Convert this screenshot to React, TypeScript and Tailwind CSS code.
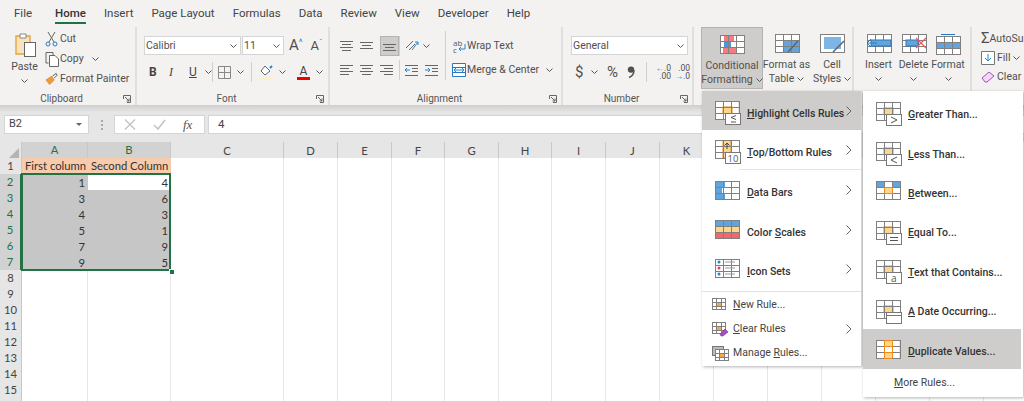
import type { ReactNode } from "react";

const tabs = ["File", "Home", "Insert", "Page Layout", "Formulas", "Data", "Review", "View", "Developer", "Help"];

const Chevron = ({ className = "" }: { className?: string }) => (
  <svg width="7" height="4" viewBox="0 0 7 4" className={`shrink-0 ${className}`}>
    <path d="M.5.5 3.5 3.5 6.5.5" fill="none" stroke="#555" strokeWidth="1" />
  </svg>
);

const Launcher = () => (
  <svg width="8" height="8" viewBox="0 0 8 8" className="shrink-0">
    <path d="M.5 4V.5H7.5V7.5H4M2 2 6 6M6 3.5V6H3.5" fill="none" stroke="#666" />
  </svg>
);

const Sep = ({ h = "h-[20px]" }: { h?: string }) => <div className={`w-px ${h} bg-[#d2d0ce] shrink-0`} />;

const Group = ({ width, label, children }: { width: string; label: string; children: ReactNode }) => (
  <div className={`${width} shrink-0 flex flex-col border-r-2 border-[#e1dfdd]`}>
    <div className="h-[64px]">{children}</div>
    <div className="h-[14px] flex items-center pr-[4px] pt-[1px] text-[10px] leading-none text-[#555]">
      <span className="flex-1 text-center">{label}</span>
      <Launcher />
    </div>
  </div>
);

const Lines = ({ kind, dy = 0 }: { kind: "l" | "c" | "r"; dy?: number }) => {
  const long = 13;
  const short = 9;
  const x = kind === "l" ? 0 : kind === "c" ? 2 : 4;
  return (
    <svg width="13" height="13" viewBox="0 0 13 13">
      <g stroke="#666" strokeWidth="1">
        <path d={`M0 ${1.5 + dy}H${long}`} />
        <path d={`M${x} ${4.5 + dy}H${x + short}`} />
        <path d={`M0 ${7.5 + dy}H${long}`} />
        {dy === 0 && <path d={`M${x} 10.5H${x + short}`} />}
      </g>
    </svg>
  );
};

const Indent = ({ flip = false }: { flip?: boolean }) => (
  <svg width="13" height="13" viewBox="0 0 13 13">
    <path d="M0 1.5H13M7 4.5H13M7 7.5H13M0 11.5H13" stroke="#666" />
    <path d={flip ? "M0 6H5M3 4 5 6 3 8" : "M5 6H0M2 4 0 6 2 8"} stroke="#1e88d2" fill="none" />
  </svg>
);

const Sheet = ({ x = 0, y = 0, w = 24, h = 18, cols = [8, 16], rows = [6, 12] }: { x?: number; y?: number; w?: number; h?: number; cols?: number[]; rows?: number[] }) => (
  <g stroke="#808080" strokeWidth="1" fill="none">
    {cols.map((c) => <path key={c} d={`M${x + c + 0.5} ${y}V${y + h}`} />)}
    {rows.map((r) => <path key={r} d={`M${x} ${y + r + 0.5}H${x + w}`} />)}
    <rect x={x + 0.5} y={y + 0.5} width={w} height={h} />
  </g>
);

const Overlay = ({ mark }: { mark: string }) => (
  <g>
    <rect x="10.5" y="12.5" width="15" height="11" fill="#fff" stroke="#777" />
    {mark === ">" && <path d="M15 15 21 18 15 21" fill="none" stroke="#555" />}
    {mark === "<" && <path d="M21 15 15 18 21 21" fill="none" stroke="#555" />}
    {mark === "<=" && <path d="M21 14.5 16 16.5 21 18.5M16 21H21" fill="none" stroke="#555" />}
    {mark === "=" && <path d="M14 16.5H22M14 19.5H22" fill="none" stroke="#555" />}
    {mark === "a" && <text x="15" y="21.5" fontSize="10" fill="#555" fontFamily="Open Sans">a</text>}
    {mark === "10" && <text x="12.5" y="22" fontSize="9.5" fill="#555" fontFamily="Open Sans">10</text>}
    {mark === "date" && <path d="M10.5 15.5H25.5" stroke="#777" />}
  </g>
);

const MenuIcon = ({ kind }: { kind: string }) => (
  <svg width="27" height="25" viewBox="0 0 27 25" className="shrink-0">
    <rect x="0.5" y="0.5" width="23" height="18" fill="#fff" />
    {["<=", ">", "<", "=", "a", "date"].includes(kind) && <rect x="8" y="6" width="9" height="6.5" fill="#fbd68b" stroke="#ed8a19" />}
    {kind === "top" && <rect x="8" y="0" width="8" height="18" fill="#fbd68b" stroke="#ed8a19" />}
    {kind === "between" && (
      <>
        <rect x="0.5" y="0.5" width="8" height="6" fill="#62a5dc" />
        <rect x="16" y="0.5" width="8" height="6" fill="#62a5dc" />
      </>
    )}
    {kind === "bars" && <path d="M1 1H10V6H7V12H10V18H1Z" fill="#62a5dc" />}
    {kind === "scales" && (
      <>
        <rect x="1" y="1" width="23" height="5" fill="#62a5dc" />
        <rect x="1" y="7" width="23" height="5" fill="#fbd68b" />
        <rect x="1" y="13" width="23" height="5" fill="#f0696e" />
      </>
    )}
    {kind === "dup" && (
      <>
        <rect x="8" y="0.5" width="8" height="6" fill="#fbd68b" />
        <rect x="8" y="12" width="8" height="6" fill="#fbd68b" />
      </>
    )}
    <Sheet />
    {kind === "between" && <rect x="8.5" y="6.5" width="8" height="6" fill="#fbd68b" stroke="#ed8a19" />}
    {kind === "dup" && <path d="M8.5 0V18M16.5 0V18M8 .5H16M8 6.5H16M8 12.5H16M8 18.5H16" stroke="#ed8a19" fill="none" />}
    {kind === "icons" && (
      <>
        <circle cx="4" cy="3" r="1.5" fill="#1e88d2" />
        <circle cx="4" cy="9" r="1.5" fill="#e8404a" />
        <circle cx="4" cy="15" r="1.5" fill="#1e88d2" />
        <path d="M10 3H20M10 9H20M10 15H20" stroke="#999" />
      </>
    )}
    {["<=", ">", "<", "=", "a", "date"].includes(kind) && <Overlay mark={kind} />}
    {kind === "top" && (
      <>
        <path d="M12 9V3M9.5 5.5 12 3 14.5 5.5" stroke="#444" fill="none" />
        <Overlay mark="10" />
      </>
    )}
  </svg>
);

const SmallIcon = ({ kind }: { kind: string }) => (
  <svg width="17" height="15" viewBox="0 0 17 15" className="shrink-0">
    {kind === "manage" && <rect x="0.5" y="0.5" width="11" height="9" fill="#bbb" stroke="#777" />}
    <g transform={kind === "manage" ? "translate(3 3)" : ""}>
      <rect x="0.5" y="0.5" width="13" height="11" fill="#fff" />
      <rect x="4" y="4" width="5" height="4" fill="#f5a742" />
      <Sheet w={13} h={11} cols={[4, 9]} rows={[4, 8]} />
    </g>
    {kind === "clear" && <path d="M8 12 13 7 16 10 11 14H9Z" fill="#a64cc0" stroke="#7c2f96" strokeWidth=".6" />}
  </svg>
);

const Key = ({ text, k }: { text: string; k: number }) => (
  <>
    {text.slice(0, k)}
    <u>{text[k]}</u>
    {text.slice(k + 1)}
  </>
);

const MenuChevron = ({ className = "" }: { className?: string }) => (
  <svg width="6" height="10" viewBox="0 0 6 10" className={`shrink-0 ${className}`}>
    <path d="M.5.5 5 5 .5 9.5" fill="none" stroke="#666" />
  </svg>
);

const mainItems = [
  { kind: "<=", text: "Highlight Cells Rules", k: 0, h: "h-[39px]", active: true },
  { kind: "top", text: "Top/Bottom Rules", k: 0, h: "h-[39px]", divider: true },
  { kind: "bars", text: "Data Bars", k: 0, h: "h-[40px]" },
  { kind: "scales", text: "Color Scales", k: 6, h: "h-[39px]" },
  { kind: "icons", text: "Icon Sets", k: 0, h: "h-[39px]" },
];

const subItems = [
  { kind: ">", text: "Greater Than...", k: 0, h: "h-[41px]" },
  { kind: "<", text: "Less Than...", k: 0, h: "h-[39px]" },
  { kind: "between", text: "Between...", k: 0, h: "h-[39px]" },
  { kind: "=", text: "Equal To...", k: 0, h: "h-[40px]" },
  { kind: "a", text: "Text that Contains...", k: 0, h: "h-[39px]" },
  { kind: "date", text: "A Date Occurring...", k: 0, h: "h-[40px]" },
  { kind: "dup", text: "Duplicate Values...", k: 0, h: "h-[40px]", active: true },
];

const Menus = () => (
  <div className="absolute left-[702px] top-[91px] flex items-start font-['Roboto',sans-serif] text-[10.5px] text-[#333]">
    <div className="w-[160px] bg-white shadow-[1px_1px_3px_rgba(0,0,0,0.3)] border-r border-[#d8d8d8]">
      {mainItems.map((m) => (
        <div key={m.text}>
          <div className={`${m.h} flex items-center pl-[13px] pr-[9px] pt-[6px] ${m.active ? "bg-[#cfcdcb]" : ""}`}>
            <MenuIcon kind={m.kind} />
            <span className="ml-[5px] flex-1 font-medium whitespace-nowrap"><Key text={m.text} k={m.k} /></span>
            <MenuChevron className="-mt-[6px]" />
          </div>
          {m.divider && <div className="h-px ml-[37px] bg-[#e6e4e2]" />}
        </div>
      ))}
      <div className="border-t border-[#e1dfdd] mt-[3px] pt-[1px] pb-[1px] text-[#444]">
        <div className="h-[24px] flex items-center pl-[10px]">
          <SmallIcon kind="new" />
          <span className="ml-[4px]"><Key text="New Rule..." k={0} /></span>
        </div>
        <div className="h-[24px] flex items-center pl-[10px] pr-[9px]">
          <SmallIcon kind="clear" />
          <span className="ml-[4px] flex-1"><Key text="Clear Rules" k={0} /></span>
          <MenuChevron />
        </div>
        <div className="h-[24px] flex items-center pl-[10px]">
          <SmallIcon kind="manage" />
          <span className="ml-[4px]">Manage <u>R</u>ules...</span>
        </div>
      </div>
    </div>
    <div className="ml-[1px] w-[160px] bg-white shadow-[1px_1px_3px_rgba(0,0,0,0.3)] pr-[2px]">
      {subItems.map((s) => (
        <div key={s.text} className={`${s.h} flex items-center pl-[13px] pt-[6px] ${s.active ? "bg-[#cfcdcb]" : ""}`}>
          <MenuIcon kind={s.kind} />
          <span className="ml-[5px] font-medium whitespace-nowrap"><Key text={s.text} k={s.k} /></span>
        </div>
      ))}
      <div className="h-[28px] flex items-center pl-[31px] text-[#444]"><Key text="More Rules..." k={0} /></div>
    </div>
  </div>
);

const LargeButton = ({ lines, icon, width, active = false }: { lines: ReactNode[]; icon: ReactNode; width: string; active?: boolean }) => (
  <div className={`${width} h-[62px] shrink-0 flex flex-col items-center pt-[6px] leading-[14px] text-center whitespace-nowrap ${active ? "bg-[#cfcdcb] border border-[#b5b3b1]" : ""}`}>
    <div className="h-[24px] flex items-center">{icon}</div>
    <div className="mt-[1px]">{lines[0]}</div>
    <div className="flex items-center gap-[3px] h-[14px]">{lines[1]}</div>
  </div>
);

const BigGrid = ({ children, top = 0 }: { children?: ReactNode; top?: number }) => (
  <svg width="26" height="24" viewBox="0 0 26 24">
    <g transform={`translate(1 ${top})`}>{children}</g>
  </svg>
);

const Ribbon = () => (
  <div className="h-[78px] bg-[#f3f2f1] flex text-[10.5px] text-[#505050] font-['Roboto',sans-serif]">
    <Group width="w-[137px]" label="Clipboard">
      <div className="flex pl-[12px] pt-[2px]">
        <div className="w-[25px] pt-[3px] flex flex-col items-center">
          <svg width="25" height="26" viewBox="0 0 25 26">
            <path d="M4 4H18V22H4Z" fill="#f7e3c0" stroke="#e8a33d" strokeWidth="1.4" />
            <path d="M8 2H14V6H8Z" fill="#fff" stroke="#888" />
            <rect x="12.5" y="10.5" width="11" height="14" fill="#fff" stroke="#666" />
          </svg>
          <span className="mt-[2px] leading-[14px]">Paste</span>
          <Chevron className="mt-[5px]" />
        </div>
        <div className="ml-[8px] flex flex-col whitespace-nowrap">
          <div className="h-[20px] flex items-center gap-[2px]">
            <svg width="13" height="15" viewBox="0 0 13 15">
              <path d="M3 0 9 10M10 0 4 10" stroke="#666" fill="none" />
              <circle cx="3" cy="12" r="2" fill="none" stroke="#2a78c0" />
              <circle cx="10" cy="12" r="2" fill="none" stroke="#2a78c0" />
            </svg>
            Cut
          </div>
          <div className="h-[20px] flex items-center">
            <svg width="15" height="15" viewBox="0 0 15 15">
              <path d="M1 .5H8V3M3.5 11H1V.5" fill="none" stroke="#666" />
              <path d="M4.5 3.5H10L13.5 7V14.5H4.5Z" fill="#fff" stroke="#666" />
            </svg>
            Copy
            <Chevron className="ml-[8px]" />
          </div>
          <div className="h-[20px] flex items-center gap-[2px]">
            <svg width="13" height="14" viewBox="0 0 14 14">
              <path d="M1 8 7 4 10 8 5 13Z" fill="#ef9b3a" stroke="#d77f1c" strokeWidth=".7" />
              <path d="M8 4 12 1 13 3 10 6" fill="none" stroke="#555" />
            </svg>
            Format Painter
          </div>
        </div>
      </div>
    </Group>
    <Group width="w-[193px]" label="Font">
      <div className="pt-[9px] pl-[7px] flex items-center">
        <div className="w-[97px] h-[19px] bg-white border border-[#d5d5d5] flex items-center justify-between pl-[1px] pr-[3px]">Calibri<Chevron /></div>
        <div className="ml-[1px] w-[42px] h-[19px] bg-white border border-[#d5d5d5] flex items-center justify-between pl-[1px] pr-[3px]">11<Chevron /></div>
        <span className="ml-[5px] text-[15px] leading-none">A<span className="text-[9px] text-[#1e88d2] align-top">^</span></span>
        <span className="ml-[8px] text-[13px] leading-none">A<span className="text-[8px] text-[#1e88d2] align-top">ˇ</span></span>
      </div>
      <div className="mt-[6px] pl-[12px] h-[22px] flex items-center text-[12px] text-[#444]">
        <span className="w-[20px] font-bold">B</span>
        <span className="w-[20px] italic font-['Liberation_Serif',serif]">I</span>
        <span className="w-[16px] underline">U</span>
        <Chevron />
        <Sep />
        <svg width="13" height="13" viewBox="0 0 13 13" className="ml-[5px]"><path d="M.5.5H12.5V12.5H.5ZM6.5.5V12.5M.5 6.5H12.5" fill="none" stroke="#888" /></svg>
        <Chevron className="ml-[6px] mr-[7px]" />
        <Sep />
        <svg width="14" height="15" viewBox="0 0 14 15" className="ml-[7px]">
          <path d="M6 1 11 6 6 10 2 6Z" fill="#fff" stroke="#666" />
          <path d="M11 3 13 1" stroke="#1e88d2" strokeWidth="2" />
          <rect x="0" y="12" width="14" height="3" fill="#fdf2c4" />
        </svg>
        <Chevron className="ml-[6px]" />
        <div className="ml-[11px] flex flex-col items-center w-[13px] leading-none text-[12px]">
          <span className="h-[12px]">A</span>
          <span className="w-[13px] h-[3px] bg-[#f00000]" />
        </div>
        <Chevron className="ml-[6px]" />
      </div>
    </Group>
    <Group width="w-[233px]" label="Alignment">
      <div className="pt-[8px] pl-[10px] h-[30px] flex items-center">
        <span className="w-[20px] flex"><Lines kind="c" dy={0} /></span>
        <span className="w-[20px] flex"><Lines kind="c" dy={1} /></span>
        <span className="w-[19px] h-[20px] flex items-center justify-center bg-[#cfcdcb] border border-[#b5b3b1]"><Lines kind="c" dy={3} /></span>
        <Sep />
        <svg width="15" height="14" viewBox="0 0 15 14" className="ml-[5px]">
          <path d="M1 9 8 2M4 11 10 5" stroke="#666" fill="none" />
          <path d="M7 11 13 3M10 3H13V6" stroke="#1e88d2" fill="none" />
        </svg>
        <Chevron className="ml-[3px] mr-[15px]" />
        <Sep h="h-[30px]" />
        <svg width="14" height="15" viewBox="0 0 14 15" className="ml-[7px]">
          <text x="0" y="7" fontSize="8" fill="#555" fontFamily="Open Sans">ab</text>
          <text x="0" y="14" fontSize="8" fill="#555" fontFamily="Open Sans">c</text>
          <path d="M12 5V10H6M8 8 6 10 8 12" stroke="#1e88d2" fill="none" />
        </svg>
        <span>Wrap Text</span>
      </div>
      <div className="mt-[2px] pl-[10px] h-[22px] flex items-center">
        <span className="w-[20px] flex"><Lines kind="l" /></span>
        <span className="w-[20px] flex"><Lines kind="c" /></span>
        <span className="w-[19px] flex"><Lines kind="r" /></span>
        <Sep />
        <span className="ml-[5px] w-[20px] flex"><Indent /></span>
        <span className="w-[20px] flex"><Indent flip /></span>
        <Sep h="h-[20px]" />
        <svg width="14" height="14" viewBox="0 0 14 14" className="ml-[6px]">
          <path d="M.5.5H13.5V13.5H.5ZM.5 4.5H13.5M.5 9.5H13.5" fill="#fff" stroke="#2a78c0" />
          <path d="M2 7H12M4 5 2 7 4 9M10 5 12 7 10 9" stroke="#1e88d2" fill="none" />
        </svg>
        <span className="ml-[1px] whitespace-nowrap">Merge &amp; Center</span>
        <Chevron className="ml-[7px]" />
      </div>
    </Group>
    <Group width="w-[131px]" label="Number">
      <div className="pt-[9px] pl-[8px]">
        <div className="w-[117px] h-[19px] bg-white border border-[#d5d5d5] flex items-center justify-between pl-[1px] pr-[3px]">General<Chevron /></div>
      </div>
      <div className="mt-[6px] pl-[12px] h-[22px] flex items-center">
        <span className="w-[16px] text-[15px]">$</span>
        <Chevron />
        <span className="ml-[9px] w-[20px] text-[15px]">%</span>
        <span className="w-[19px] flex">
          <svg width="8" height="12" viewBox="0 0 8 12">
            <circle cx="4" cy="3.6" r="3.2" fill="#505050" />
            <path d="M7 4C7 8 5 10.5 2 11.5" fill="none" stroke="#505050" strokeWidth="1.4" />
          </svg>
        </span>
        <Sep />
        <span className="ml-[5px] w-[19px] text-[8.5px] leading-[8px] text-right"><span className="text-[#1e88d2]">←</span>.0<br />.00</span>
        <span className="w-[19px] text-[8.5px] leading-[8px] text-right">.00<br /><span className="text-[#1e88d2]">→</span>.0</span>
      </div>
    </Group>
    <div className="w-[7px] shrink-0" />
    <div className="w-[153px] shrink-0 flex border-r-2 border-[#e1dfdd]">
      <LargeButton
        width="w-[62px]"
        active
        lines={["Conditional", <>Formatting<Chevron /></>]}
        icon={
          <BigGrid top={1}>
            <rect x="0.5" y="0.5" width="24" height="18" fill="#fff" />
            <rect x="4" y="0" width="10" height="6" fill="#f47c80" />
            <rect x="4" y="6" width="7" height="6" fill="#4d97d6" />
            <rect x="3" y="12" width="14" height="6" fill="#f47c80" />
            <Sheet />
          </BigGrid>
        }
      />
      <LargeButton
        width="w-[47px]"
        lines={["Format as", <>Table<Chevron /></>]}
        icon={
          <BigGrid top={1}>
            <rect x="0.5" y="0.5" width="24" height="18" fill="#fff" />
            <rect x="8" y="6" width="16" height="12" fill="#62a5dc" />
            <Sheet />
            <path d="M13 18 23 7" stroke="#666" strokeWidth="1.6" />
          </BigGrid>
        }
      />
      <LargeButton
        width="w-[44px]"
        lines={["Cell", <>Styles<Chevron /></>]}
        icon={
          <BigGrid top={1}>
            <rect x="0.5" y="0.5" width="24" height="18" fill="#fff" stroke="#808080" />
            <rect x="4" y="3" width="17" height="12" fill="#7db6e6" />
            <path d="M13 18 24 7" stroke="#666" strokeWidth="1.6" />
          </BigGrid>
        }
      />
    </div>
    <div className="w-[118px] shrink-0 flex pl-[7px] border-r-2 border-[#e1dfdd]">
      <LargeButton
        width="w-[35px]"
        lines={["Insert", <Chevron />]}
        icon={
          <BigGrid top={1}>
            <rect x="0.5" y="0.5" width="24" height="18" fill="#fff" />
            <Sheet />
            <rect x="4" y="6" width="20" height="6" fill="#62a5dc" stroke="#2a78c0" />
            <path d="M10 9H0M4 5 0 9 4 13" fill="none" stroke="#2a78c0" />
          </BigGrid>
        }
      />
      <LargeButton
        width="w-[35px]"
        lines={["Delete", <Chevron />]}
        icon={
          <BigGrid top={1}>
            <rect x="0.5" y="0.5" width="24" height="18" fill="#fff" />
            <Sheet />
            <rect x="4" y="6" width="12" height="6" fill="#62a5dc" stroke="#2a78c0" />
            <path d="M14 4 24 14M24 4 14 14" stroke="#f0565c" strokeWidth="1.2" />
          </BigGrid>
        }
      />
      <LargeButton
        width="w-[34px]"
        lines={["Format", <Chevron />]}
        icon={
          <BigGrid top={3}>
            <rect x="0.5" y="0.5" width="24" height="18" fill="#fff" />
            <rect x="0.5" y="6" width="24" height="6" fill="#62a5dc" />
            <Sheet />
            <path d="M5 -1.5H19" stroke="#2a78c0" />
          </BigGrid>
        }
      />
    </div>
    <div className="flex-1 pl-[9px] pt-[2px] whitespace-nowrap overflow-hidden">
      <div className="h-[19px] flex items-center"><span className="w-[16px] text-[15px] leading-none">Σ</span>AutoSum</div>
      <div className="h-[19px] flex items-center">
        <svg width="14" height="14" viewBox="0 0 14 14" className="mr-[2px]"><path d="M.5.5H13.5V13.5H.5Z" fill="#fff" stroke="#777" /><path d="M7 3V10M4 7 7 10 10 7" stroke="#1e88d2" fill="none" /></svg>
        Fill<Chevron className="ml-[3px]" />
      </div>
      <div className="h-[19px] flex items-center">
        <svg width="14" height="12" viewBox="0 0 14 12" className="mr-[2px]"><path d="M1 7 8 1 13 5 6 11H4Z" fill="#f3d9f7" stroke="#a64cc0" /></svg>
        Clear
      </div>
    </div>
  </div>
);

const columns = ["A", "B", "C", "D", "E", "F", "G", "H", "I", "J", "K", "L", "M", "N", "O", "P"];
const data: Record<number, [string, string]> = {
  1: ["First column", "Second Column"],
  2: ["1", "4"],
  3: ["3", "6"],
  4: ["4", "3"],
  5: ["5", "1"],
  6: ["7", "9"],
  7: ["9", "5"],
};
const rows = Array.from({ length: 16 }, (_, i) => i + 1);
const colClass = "grid grid-cols-[22px_66px_83px_113px_54px_54px_53px_54px_53px_54px_54px_54px_54px_54px_54px_54px_54px]";

const Spreadsheet = () => (
  <div className="relative font-['Lato',sans-serif] text-[11.25px] text-[#333]">
    <div className={`${colClass} h-[16px]`}>
      <div className="bg-[#e6e6e6] border-r border-b border-[#c8c8c8] flex items-end justify-end p-[2px]">
        <div className="w-0 h-0 border-l-[10px] border-l-transparent border-b-[10px] border-b-[#b4b4b4]" />
      </div>
      {columns.map((c, i) => (
        <div
          key={c}
          className={`flex items-center justify-center border-r border-[#c8c8c8] ${i < 2 ? "bg-[#d2d2d2] text-[#217346] border-b-2 border-b-[#217346]" : "bg-[#e6e6e6] text-[#444] border-b border-b-[#c8c8c8]"}`}
        >
          {c}
        </div>
      ))}
    </div>
    {rows.map((r) => {
      const sel = r >= 2 && r <= 7;
      return (
        <div key={r} className={`${colClass} h-[16px]`}>
          <div className={`flex items-center justify-center border-b border-r border-[#c8c8c8] ${sel ? "bg-[#d2d2d2] text-[#217346] border-r-2 border-r-[#217346]" : "bg-[#e6e6e6] text-[#444]"}`}>{r}</div>
          {columns.map((c, i) => {
            const value = i < 2 ? data[r]?.[i] : undefined;
            let tone = "bg-white border-r border-b border-[#e6e6e6]";
            if (r === 1 && i < 2) tone = "bg-[#f8cbad] border-r border-b border-[#f8cbad]";
            if (sel && i < 2) tone = "bg-[#c6c6c6]";
            if (r === 2 && i === 1) tone = "bg-white";
            return (
              <div key={c} className={`flex items-center whitespace-nowrap ${r > 1 ? "justify-end pr-[3px]" : "pl-[3px]"} ${tone}`}>
                {value}
              </div>
            );
          })}
        </div>
      );
    })}
    <div className="absolute left-[21px] top-[31px] w-[150px] h-[98px] border-2 border-[#217346]" />
    <div className="absolute left-[169px] top-[127px] w-[4px] h-[4px] bg-[#217346] border border-white box-content" />
  </div>
);

const FormulaBar = () => (
  <div className="h-[29px] bg-[#e6e6e6] pt-[2px] font-['Roboto',sans-serif] text-[11px] text-[#444]">
    <div className="flex items-center h-[19px] pl-[4px]">
      <div className="w-[85px] h-full bg-white border border-[#d5d5d5] flex items-center justify-between pl-[4px] pr-[6px]">
        B2
        <svg width="6" height="3" viewBox="0 0 6 3"><path d="M0 0H6L3 3Z" fill="#666" /></svg>
      </div>
      <div className="w-[25px] flex flex-col items-center gap-[2px]">
        <span className="w-[2px] h-[2px] bg-[#aaa]" />
        <span className="w-[2px] h-[2px] bg-[#aaa]" />
        <span className="w-[2px] h-[2px] bg-[#aaa]" />
      </div>
      <div className="w-[91px] h-full bg-white border border-[#d5d5d5] flex items-center pl-[9px]">
        <svg width="12" height="11" viewBox="0 0 12 11"><path d="M1 .5 11 10.5M11 .5 1 10.5" stroke="#c4c4c4" strokeWidth="1.4" /></svg>
        <svg width="13" height="11" viewBox="0 0 13 11" className="ml-[17px]"><path d="M1 6 5 10 12 1" stroke="#c4c4c4" strokeWidth="1.6" fill="none" /></svg>
        <span className="ml-[17px] italic font-['Liberation_Serif',serif] text-[13px] text-[#555]">fx</span>
      </div>
      <div className="ml-[3px] flex-1 h-full bg-white border-y border-l border-[#d5d5d5] flex items-center pl-[9px] text-[11.5px]">4</div>
    </div>
  </div>
);

export default function App() {
  return (
    <div className="relative w-[1024px] h-[401px] overflow-hidden bg-white">
      <div className="h-[27px] bg-[#f3f2f1] flex items-center gap-[18px] pl-[14px] font-['Roboto',sans-serif] text-[11.5px] text-[#444]">
        {tabs.map((t) => (
          <div
            key={t}
            className={`relative h-full flex items-center shrink-0 ${t === "File" ? "mr-[5px]" : ""} ${t === "Home" ? "font-medium text-[#333]" : ""}`}
          >
            {t}
            {t === "Home" && <span className="absolute bottom-[3px] left-0 right-0 h-[2px] bg-[#217346]" />}
          </div>
        ))}
      </div>
      <Ribbon />
      <div className="h-[8px] bg-gradient-to-b from-[#cfcfcf] to-[#e8e8e8]" />
      <FormulaBar />
      <Spreadsheet />
      <Menus />
    </div>
  );
}
